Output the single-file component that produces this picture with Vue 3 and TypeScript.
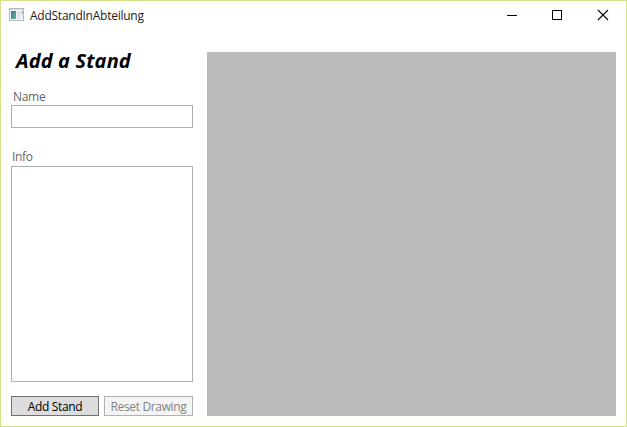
<script setup lang="ts">
import { ref } from 'vue'

const title = 'AddStandInAbteilung'
const name = ref('')
const info = ref('')

function reset(): void {
  name.value = ''
  info.value = ''
}
</script>

<template>
  <div class="window">
    <header class="titlebar">
      <svg class="app-icon" width="16" height="14" viewBox="0 0 16 14" shape-rendering="crispEdges">
        <defs>
          <linearGradient id="pane" x1="0" y1="0" x2="1" y2="1">
            <stop offset="0" stop-color="#3f74a3" />
            <stop offset="1" stop-color="#62b58d" />
          </linearGradient>
        </defs>
        <rect x="0.5" y="0.5" width="14" height="12" fill="#f4f5f7" stroke="#b4b7bb" />
        <rect x="1" y="1" width="13" height="1" fill="#dcdfe4" />
        <rect x="2" y="3" width="5" height="8" fill="url(#pane)" />
        <rect x="8" y="3" width="3" height="8" fill="#e0e3ea" />
        <rect x="12" y="3" width="2" height="3" fill="#a9cdc4" />
        <rect x="12" y="6" width="2" height="5" fill="#eceef1" />
      </svg>
      <span class="caption">{{ title }}</span>
      <div class="controls">
        <svg width="46" height="30" viewBox="0 0 46 30" shape-rendering="crispEdges">
          <rect x="18" y="14" width="10" height="1" />
        </svg>
        <svg width="45" height="30" viewBox="0 0 45 30" shape-rendering="crispEdges">
          <rect x="17.5" y="9.5" width="9" height="9" fill="none" stroke="#000" />
        </svg>
        <svg width="46" height="30" viewBox="0 0 46 30">
          <path d="M18 9l10 10M28 9l-10 10" fill="none" stroke="#000" stroke-width="1.1" />
        </svg>
      </div>
    </header>
    <main class="content">
      <section class="form">
        <h1>Add a Stand</h1>
        <label class="name-label" for="name">Name</label>
        <input id="name" v-model="name" type="text" />
        <label class="info-label" for="info">Info</label>
        <textarea id="info" v-model="info"></textarea>
        <div class="actions">
          <button class="add" type="button">Add Stand</button>
          <button class="reset" type="button" disabled @click="reset">Reset Drawing</button>
        </div>
      </section>
      <div class="drawing"></div>
    </main>
  </div>
</template>

<style>
body {
  margin: 0;
  overflow: hidden;
}
</style>

<style scoped>
.window,
.window * {
  box-sizing: border-box;
}
.window {
  display: flex;
  flex-direction: column;
  width: 627px;
  height: 427px;
  border: 1px solid #d4e08a;
  background: #fff;
  font-family: "Open Sans", "Noto Sans", sans-serif;
  font-size: 12px;
  color: #000;
}
.titlebar {
  display: flex;
  align-items: flex-start;
  flex: none;
  height: 30px;
  padding-left: 8px;
}
.app-icon {
  margin-top: 7px;
}
.caption {
  margin: 6px 0 0 5px;
  line-height: 18px;
  letter-spacing: -0.25px;
  color: #1c1c1c;
}
.controls {
  display: flex;
  margin-left: auto;
}
.content {
  display: flex;
  flex: 1;
  gap: 14px;
  padding: 20px 10px 10px;
}
.form {
  display: flex;
  flex-direction: column;
  width: 182px;
}
h1 {
  height: 37px;
  margin: 0;
  padding-left: 5px;
  font-size: 20px;
  font-style: italic;
  font-weight: 700;
  line-height: 20px;
  letter-spacing: 0.15px;
  white-space: nowrap;
}
label {
  line-height: 17px;
  letter-spacing: -0.3px;
  color: #666;
}
.name-label {
  height: 17px;
  padding-left: 2px;
}
.info-label {
  height: 18px;
  margin-top: 20px;
  padding-left: 1px;
}
input,
textarea {
  display: block;
  width: 182px;
  margin: 0;
  padding: 2px;
  border: 1px solid #abadb3;
  border-radius: 0;
  background: #fff;
  font: inherit;
  resize: none;
  outline: none;
}
input {
  height: 23px;
}
textarea {
  height: 216px;
}
.actions {
  display: flex;
  gap: 5px;
  margin-top: 14px;
}
button {
  height: 20px;
  padding: 2px 0 0;
  border: 1px solid #707070;
  border-radius: 0;
  font: inherit;
  line-height: 16px;
  letter-spacing: -0.35px;
  white-space: nowrap;
}
.add {
  width: 88px;
  background: #ddd;
  color: #000;
}
.reset {
  width: 89px;
  border-color: #adb2b5;
  background: #f4f4f4;
  color: #838383;
}
.drawing {
  flex: 1;
  margin-top: 1px;
  background: #bbb;
}
</style>
